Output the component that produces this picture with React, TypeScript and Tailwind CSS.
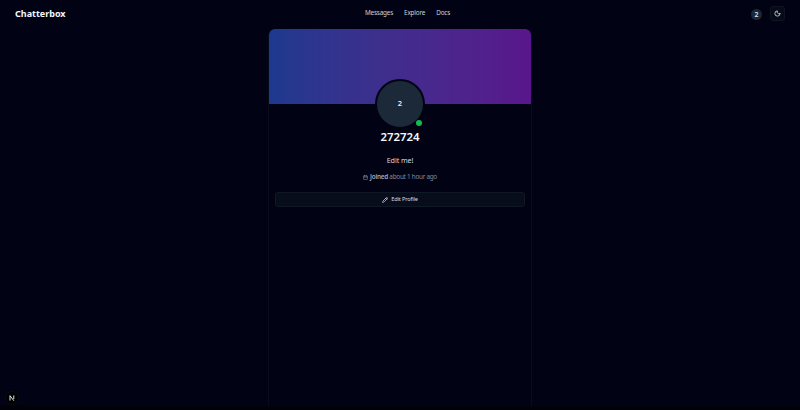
import React from "react";
import { Calendar, Moon, Pencil } from "lucide-react";

const links = ["Messages", "Explore", "Docs"];

function Header() {
  return (
    <header className="grid h-[26px] shrink-0 grid-cols-[1fr_auto_1fr] items-center pr-[15px] pl-[15px]">
      <span className="text-[9px] leading-none font-bold text-[#f5f8fb]">Chatterbox</span>
      <nav className="flex gap-[11px] pt-px pl-[15px] text-[6.4px] leading-none tracking-[-0.2px] text-[#cbd2dc]">
        {links.map((label) => (
          <a key={label}>{label}</a>
        ))}
      </nav>
      <div className="flex items-center justify-end gap-[8px]">
        <span className="mt-[2px] flex size-[11px] items-center justify-center rounded-full bg-[#1a2735] pt-px text-[7px] leading-none font-semibold text-[#dce3ea]">
          2
        </span>
        <button className="flex size-[15px] items-center justify-center rounded-[3px] border border-[#0d1422] bg-[#070b18] text-[#d5dbe3]">
          <Moon size={7} strokeWidth={2.8} />
        </button>
      </div>
    </header>
  );
}

function Avatar() {
  return (
    <div className="relative mt-[-25px] flex size-[50px] items-center justify-center rounded-full border-2 border-[#020313] bg-[#1c2939] text-[7.5px] leading-none font-semibold text-[#e8edf2]">
      2
      <span className="absolute right-px bottom-px size-[6px] rounded-full bg-[#12bd50]" />
    </div>
  );
}

export default function App() {
  return (
    <div className="relative flex h-[410px] w-[800px] flex-col overflow-hidden border-b-4 border-[#010109] bg-[#010213] font-['Noto_Sans',sans-serif]">
      <Header />
      <main className="mx-auto mt-[3px] flex w-[264px] flex-1 flex-col items-center rounded-t-[6px] border-x border-[#080b1a]">
        <div className="h-[75px] w-full shrink-0 rounded-t-[6px] bg-linear-to-r from-[#1c398e] to-[#59168b]" />
        <Avatar />
        <h1 className="mt-[3px] text-[11.4px] leading-[10px] font-semibold text-[#f5f8fb]">272724</h1>
        <p className="mt-[14px] text-[7.2px] leading-[9px] tracking-[-0.1px] text-[#d5dae2]">Edit me!</p>
        <p className="mt-[8px] flex h-[8px] items-center gap-[2px] text-[6.4px] leading-[8px] tracking-[-0.28px] text-[#838c9d]">
          <Calendar size={5} strokeWidth={2.8} />
          <span>
            <b className="font-semibold text-[#a1aabb]">Joined</b> about 1 hour ago
          </span>
        </p>
        <button className="mt-[11px] flex h-[15px] w-[250px] items-center justify-center gap-[3px] rounded-[3px] border border-[#101725] bg-[#080d1b] text-[5.6px] leading-none tracking-[-0.17px] text-[#d5dae2]">
          <Pencil size={6} strokeWidth={2.8} />
          Edit Profile
        </button>
      </main>
      <div className="absolute bottom-[1px] left-[5px] flex size-[14px] items-center justify-center rounded-full border border-[#090d15] bg-black text-[#e2e5e9]">
        <svg width="6" height="6" viewBox="0 0 6 6" fill="none" stroke="currentColor">
          <path d="M1 5.5V.7L4.8 5.7M4.8.5v3.6" />
        </svg>
      </div>
    </div>
  );
}
